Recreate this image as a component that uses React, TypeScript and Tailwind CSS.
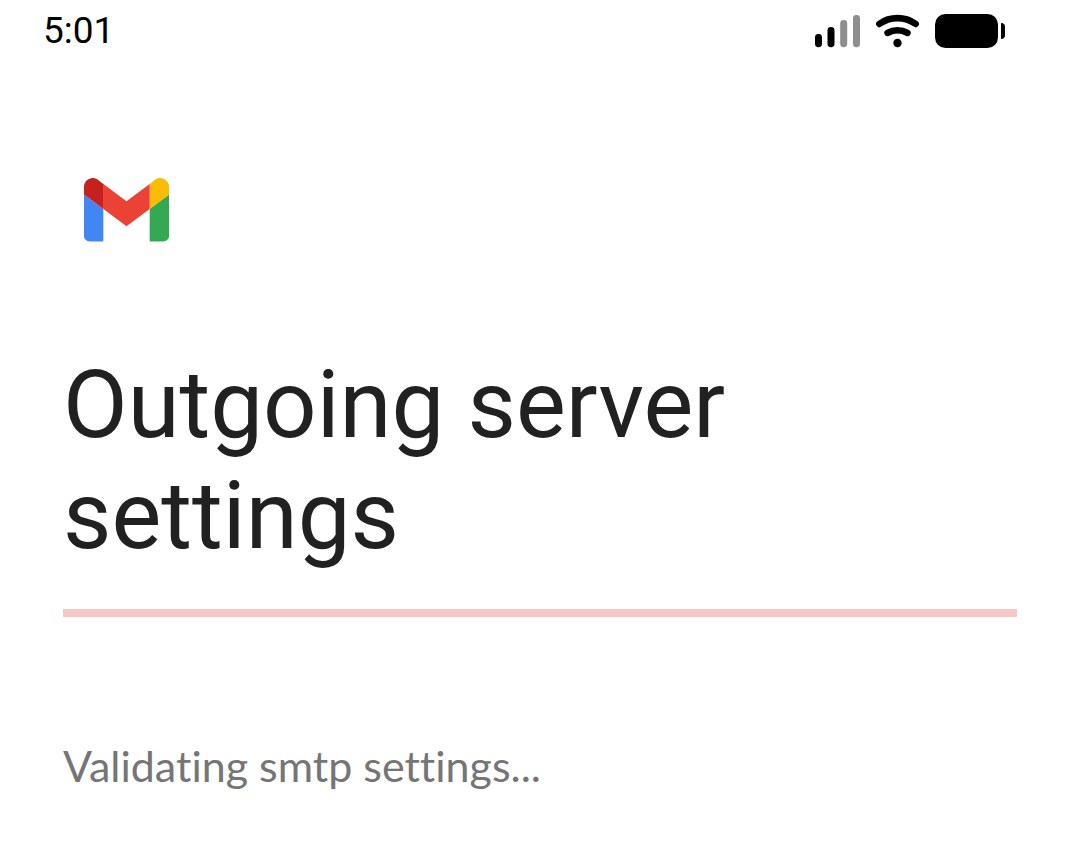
function SignalIcon() {
  return (
    <svg width="46" height="34" viewBox="0 0 46 34" role="img" aria-label="Signal strength">
      <rect x="1" y="20" width="7" height="13.2" rx="3.4" fill="#000" />
      <rect x="13.500" y="13" width="7" height="20.2" rx="3.4" fill="#000" />
      <rect x="26.200" y="6" width="7" height="27.2" rx="3.4" fill="#8e8e8e" />
      <rect x="39" y="1" width="7" height="32.2" rx="3.4" fill="#8e8e8e" />
    </svg>
  );
}

function WifiIcon() {
  return (
    <svg width="43" height="34" viewBox="0 0 43 34" role="img" aria-label="Wi-Fi">
      <g fill="none" stroke="#000" strokeWidth="6.6" strokeLinecap="round">
        <path d="M3.4 9.900C14 2.200 29 2.200 39.600 9.900" />
        <path d="M11.600 18.900C17.600 15.500 25.400 15.500 31.400 18.900" />
      </g>
      <circle cx="21.5" cy="29" r="4.2" fill="#000" />
    </svg>
  );
}

function BatteryIcon() {
  return (
    <svg width="70" height="34" viewBox="0 0 70 34" role="img" aria-label="Battery full">
      <rect width="63" height="34" rx="10.5" fill="#000" />
      <path d="M66 9c2.700 0 4 1.400 4 4v8c0 2.600-1.300 4-4 4z" fill="#000" />
    </svg>
  );
}

function GmailLogo() {
  return (
    <svg width="85" height="64" viewBox="52 42 88 66" role="img" aria-label="Gmail">
      <path fill="#4285f4" d="M58 107.500h14V74L52 59v43c0 3.320 2.690 5.500 6 5.500" />
      <path fill="#34a853" d="M120 107.500h14c3.320 0 6-2.180 6-5.500V59l-20 15" />
      <path fill="#fbbc04" d="M120 48v26l20-15v-8c0-7.420-8.470-11.650-14.400-7.200" />
      <path fill="#c5221f" d="M52 51v8l20 15V48l-5.600-4.200c-5.940-4.450-14.400-.220-14.400 7.200" />
      <path fill="#ea4335" d="M71.700 73.800V47.800L96 66l24-18v26L96 91.700" />
    </svg>
  );
}

export default function App() {
  return (
    <div className="min-h-screen bg-white pb-12 font-['Roboto',sans-serif]">
      <header className="flex items-center justify-between pt-2 pr-[75px] pl-[43px] text-black">
        <time className="text-[37px] leading-[46px]">5:01</time>
        <div className="flex items-center gap-4">
          <SignalIcon />
          <WifiIcon />
          <BatteryIcon />
        </div>
      </header>
      <main className="px-[63px] pt-31">
        <div className="pl-[21px]">
          <GmailLogo />
        </div>
        <h1 className="mt-27 max-w-[760px] text-[94px] leading-[111px] text-[#212121]">
          Outgoing server settings
        </h1>
        <div
          role="progressbar"
          aria-label="Validating settings"
          className="mt-[37px] h-2 w-full bg-[#f6c7c6]"
        />
        <p
          role="status"
          className="mt-31 font-['Lato',sans-serif] text-[43px] leading-[50px] text-[#757575] [font-variant-ligatures:none]"
        >
          Validating smtp settings...
        </p>
      </main>
    </div>
  );
}
